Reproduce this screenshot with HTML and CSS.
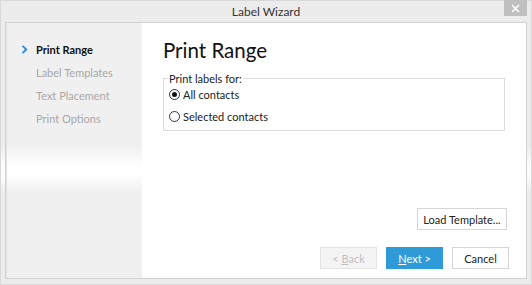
FILE: index.html
```html
<!DOCTYPE html>
<html>
<head lang="en">
    <meta charset="UTF-8">
    <title>Label Wizard</title>
    <link rel="stylesheet" href="styles.css">
</head>
<body>
<div id="window">
    <div id="titlebar">
        <span class="title">Label Wizard</span>
        <span id="close">
            <svg width="9" height="9" viewBox="0 0 9 9"><path d="M1 1L8 8M8 1L1 8" stroke="#fff" stroke-width="1.6"/></svg>
        </span>
    </div>
    <div id="frame">
        <ul id="steps">
            <li class="current">
                <svg class="chev" width="7" height="9" viewBox="0 0 7 9"><path d="M1.5 0.8L5.3 4.5L1.5 8.2" fill="none" stroke="#2b8bd3" stroke-width="1.8"/></svg>
                Print Range
            </li>
            <li>Label Templates</li>
            <li>Text Placement</li>
            <li>Print Options</li>
        </ul>
        <div id="page">
            <h1>Print Range</h1>
            <fieldset id="range">
                <legend>Print labels for:</legend>
                <label class="option first"><input type="radio" name="range" checked> All contacts</label>
                <label class="option"><input type="radio" name="range"> Selected contacts</label>
            </fieldset>
            <div class="spacer"></div>
            <div class="row load">
                <button class="btn wide">Load Template...</button>
            </div>
            <div class="row nav">
                <button class="btn" disabled>&lt; <u>B</u>ack</button>
                <button class="btn primary"><u>N</u>ext &gt;</button>
                <button class="btn">Cancel</button>
            </div>
        </div>
    </div>
</div>
</body>
</html>
```
FILE: styles.css
```css
*{
    margin: 0;
    padding: 0;
    box-sizing: border-box;
}
body{
    font-family: Lato, "Open Sans", sans-serif;
    font-size: 11px;
    color: #222;
}
ul{
    list-style: none;
}
#window{
    width: 532px;
    height: 285px;
    border: 1px solid #d9d9d9;
    background: linear-gradient(#ececec 145px, #fdfdfd 165px, #fdfdfd 175px, #ececec 192px);
    display: flex;
    flex-direction: column;
}
#titlebar{
    height: 21px;
    position: relative;
    display: flex;
    align-items: center;
    justify-content: center;
}
#titlebar .title{
    font-size: 12px;
    color: #333;
}
#close{
    position: absolute;
    top: -1px;
    right: 4px;
    width: 23px;
    height: 16px;
    background: #bfbfbf;
    display: flex;
    align-items: center;
    justify-content: center;
}
#frame{
    flex: 1;
    margin: 0 4px 5px 4px;
    border: 1px solid #d2d2d2;
    display: flex;
}
#steps{
    width: 136px;
    border-left: 1px solid #e2e2e2;
    background: linear-gradient(#f0f0f0 122px, #fefefe 142px, #fefefe 152px, #f0f0f0 169px);
    padding-top: 15px;
}
#steps li{
    height: 23px;
    line-height: 23px;
    padding-left: 29px;
    color: #a8a8a8;
    position: relative;
}
#steps li.current{
    color: #111;
    font-weight: bold;
}
#steps .chev{
    position: absolute;
    left: 14px;
    top: 7px;
}
#page{
    flex: 1;
    background: #fff;
    padding: 13px 17px 9px 21px;
    display: flex;
    flex-direction: column;
}
h1{
    font-size: 20.5px;
    font-weight: normal;
    color: #111;
    line-height: 28px;
}
#range{
    margin-top: 8px;
    margin-right: 4px;
    border: 1px solid #dcdcdc;
    padding: 0 5px 3px 5px;
    display: flex;
    flex-direction: column;
}
#range legend{
    padding: 0 1px;
    margin-left: -1px;
    color: #222;
}
.option{
    display: flex;
    align-items: center;
    height: 22px;
    gap: 3px;
}
.option.first{
    margin-top: -2px;
}
.option input{
    appearance: none;
    width: 11px;
    height: 11px;
    border: 1px solid #333;
    border-radius: 50%;
    background: #fff;
    position: relative;
}
.option input:checked::after{
    content: "";
    position: absolute;
    left: 2px;
    top: 2px;
    width: 5px;
    height: 5px;
    border-radius: 50%;
    background: #111;
}
.spacer{
    flex: 1;
}
.row{
    display: flex;
    justify-content: flex-end;
    gap: 9px;
}
.load{
    margin-bottom: 17px;
    padding-right: 2px;
}
.btn{
    font-family: inherit;
    font-size: 11px;
    width: 57px;
    height: 22px;
    border: 1px solid #d6d6d6;
    background: #fff;
    color: #222;
}
.btn.wide{
    width: 90px;
}
.btn.primary{
    background: #2e9bd8;
    border-color: #2e9bd8;
    color: #fff;
}
.btn:disabled{
    background: #f4f4f4;
    border-color: #e4e4e4;
    color: #c0c0c0;
}
```
